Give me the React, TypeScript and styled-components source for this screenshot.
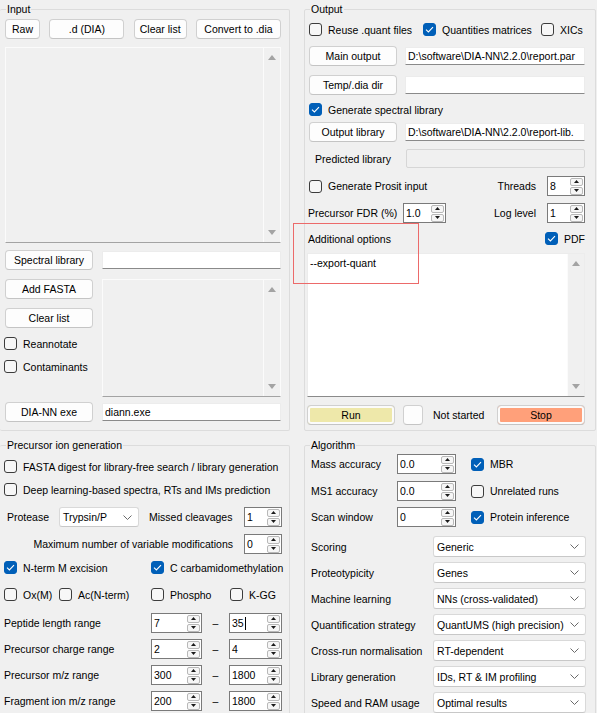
import React from "react";
import styled, { createGlobalStyle } from "styled-components";

const GlobalStyle = createGlobalStyle`
  html, body { margin: 0; padding: 0; background: #f0f0f0; }
  * { box-sizing: border-box; }
`;

const Root = styled.div`
  position: relative;
  width: 597px;
  height: 713px;
  overflow: hidden;
  background: #f0f0f0;
  display: grid;
  grid-template-columns: 290px 292px;
  grid-template-rows: 428px 290px;
  column-gap: 14px;
  row-gap: 8px;
  padding-top: 3px;
  font-family: "Liberation Sans", Arial, sans-serif;
  font-size: 10.5px;
  color: #000;
`;

const Group = styled.fieldset<{ $pl: number; $pr: number; $noLeft?: boolean }>`
  margin: 0;
  min-width: 0;
  padding: 0 ${(p) => p.$pr}px 0 ${(p) => p.$pl}px;
  border: 1px solid #dcdcdc;
  border-left: ${(p) => (p.$noLeft ? "none" : "1px solid #dcdcdc")};
  border-radius: 2px;
  display: flex;
  flex-direction: column;
`;

const Legend = styled.legend<{ $ml: number }>`
  padding: 0 1px;
  margin-left: ${(p) => p.$ml}px;
  line-height: 13px;
  font-size: 10.5px;
`;

const Row = styled.div<{ $mt?: number; $h?: number; $ml?: number; $end?: boolean; $gap?: number }>`
  display: flex;
  align-items: center;
  flex-shrink: 0;
  margin-top: ${(p) => p.$mt ?? 0}px;
  margin-left: ${(p) => p.$ml ?? 0}px;
  height: ${(p) => p.$h ?? 20}px;
  gap: ${(p) => p.$gap ?? 0}px;
  justify-content: ${(p) => (p.$end ? "flex-end" : "flex-start")};
  white-space: nowrap;
`;

const SpreadRow = styled(Row)`
  justify-content: space-between;
`;

const Spacer = styled.div`
  flex: 1;
`;

const Btn = styled.div<{ $w: number; $fill?: string }>`
  width: ${(p) => p.$w}px;
  height: 20px;
  flex-shrink: 0;
  border: 1px solid #d0d0d0;
  border-bottom-color: #c4c4c4;
  border-radius: 4px;
  background: ${(p) => p.$fill ?? "#fdfdfd"};
  box-shadow: ${(p) => (p.$fill ? "inset 0 0 0 2px #fbfbfb" : "none")};
  display: flex;
  align-items: center;
  justify-content: center;
`;

const Field = styled.div<{ $w: number; $disabled?: boolean }>`
  width: ${(p) => p.$w}px;
  height: ${(p) => (p.$disabled ? 19 : 18)}px;
  flex-shrink: 0;
  background: ${(p) => (p.$disabled ? "#f0f0f0" : "#fff")};
  border: 1px solid ${(p) => (p.$disabled ? "#d6d6d6" : "#ececec")};
  border-bottom-color: ${(p) => (p.$disabled ? "#d6d6d6" : "#8a8a8a")};
  border-radius: ${(p) => (p.$disabled ? 2 : 1)}px;
  padding-left: 2px;
  line-height: 16px;
  overflow: hidden;
  white-space: nowrap;
`;

const Label = styled.div<{ $w?: number; $center?: boolean; $pl?: number }>`
  width: ${(p) => (p.$w ? `${p.$w}px` : "auto")};
  flex-shrink: 0;
  padding-left: ${(p) => p.$pl ?? 0}px;
  text-align: ${(p) => (p.$center ? "center" : "left")};
  white-space: nowrap;
`;

const ListBox = styled.div<{ $w: number; $h: number }>`
  width: ${(p) => p.$w}px;
  height: ${(p) => p.$h}px;
  flex-shrink: 0;
  background: #f0f0f0;
  border: 1px solid #fbfbfb;
  border-bottom-color: #a3a3a3;
  display: flex;
  justify-content: flex-end;
`;

const TextArea = styled.div`
  width: 278px;
  height: 144px;
  margin-left: -2px;
  flex-shrink: 0;
  background: #fff;
  border: 1px solid #ececec;
  border-bottom-color: #8a8a8a;
  display: flex;
  padding-left: 2px;
`;

const AreaText = styled.div`
  flex: 1;
  padding-top: 3px;
  line-height: 13px;
`;

const ScrollCol = styled.div<{ $bg: string }>`
  width: 17px;
  height: 100%;
  background: ${(p) => p.$bg};
  border-left: 1px solid #fbfbfb;
  display: flex;
  flex-direction: column;
  justify-content: space-between;
  align-items: center;
  padding: 7px 0 7px;
`;

const CheckWrap = styled.div<{ $w?: number; $ml?: number }>`
  display: flex;
  align-items: center;
  gap: 6px;
  width: ${(p) => (p.$w ? `${p.$w}px` : "auto")};
  margin-left: ${(p) => p.$ml ?? 0}px;
  flex-shrink: 0;
  height: 13px;
  white-space: nowrap;
`;

const Box = styled.span<{ $on: boolean }>`
  width: 13px;
  height: 13px;
  flex-shrink: 0;
  border-radius: 3px;
  border: 1px solid ${(p) => (p.$on ? "#005fb8" : "#3c3c3c")};
  background: ${(p) => (p.$on ? "#005fb8" : "#f7f7f7")};
  display: flex;
  align-items: center;
  justify-content: center;
`;

const SpinBox = styled.div<{ $w: number }>`
  width: ${(p) => p.$w}px;
  height: 20px;
  flex-shrink: 0;
  background: #fff;
  border: 1px solid #7a7a7a;
  display: flex;
  align-items: center;
  padding-left: 2px;
`;

const SpinValue = styled.div`
  flex: 1;
  display: flex;
  align-items: center;
`;

const Caret = styled.span`
  width: 1px;
  height: 13px;
  background: #000;
  margin-left: 1px;
`;

const SpinBtns = styled.div`
  display: flex;
  flex-direction: column;
  gap: 1px;
  margin-right: 1px;
`;

const SpinBtn = styled.span`
  width: 13px;
  height: 8px;
  border: 1px solid #b8b8b8;
  border-radius: 2px;
  background: #f6f6f6;
  display: flex;
  align-items: center;
  justify-content: center;
`;

const Select = styled.div<{ $w: number; $h: number }>`
  width: ${(p) => p.$w}px;
  height: ${(p) => p.$h}px;
  flex-shrink: 0;
  background: #fff;
  border: 1px solid #d9d9d9;
  border-bottom-color: #c8c8c8;
  border-radius: 3px;
  display: flex;
  align-items: center;
  justify-content: space-between;
  padding: 0 6px 0 3px;
  white-space: nowrap;
  overflow: hidden;
`;

const Dash = styled.div`
  width: 27px;
  flex-shrink: 0;
  text-align: center;
`;

const Column = styled.div<{ $w: number }>`
  width: ${(p) => p.$w}px;
  align-self: flex-start;
  display: flex;
  flex-direction: column;
  flex-shrink: 0;
`;

const Highlight = styled.div`
  position: absolute;
  left: 293px;
  top: 223px;
  width: 126px;
  height: 61px;
  border: 1px solid #ec6a6a;
  pointer-events: none;
`;

function Check({ on, label, w, ml }: { on?: boolean; label: string; w?: number; ml?: number }) {
  return (
    <CheckWrap $w={w} $ml={ml}>
      <Box $on={!!on}>
        {on && (
          <svg width="9" height="7" viewBox="0 0 9 7">
            <path d="M1 3.6 L3.4 6 L8 1.2" stroke="#fff" strokeWidth="1.1" fill="none" />
          </svg>
        )}
      </Box>
      <span>{label}</span>
    </CheckWrap>
  );
}

function Tri({ down, color }: { down?: boolean; color: string }) {
  return (
    <svg width="8" height="5" viewBox="0 0 8 5">
      <path d={down ? "M0 0 L8 0 L4 5Z" : "M0 5 L4 0 L8 5Z"} fill={color} />
    </svg>
  );
}

function SmallTri({ down }: { down?: boolean }) {
  return (
    <svg width="5" height="3" viewBox="0 0 5 3">
      <path d={down ? "M0 0 L5 0 L2.5 3Z" : "M0 3 L2.5 0 L5 3Z"} fill="#1a1a1a" />
    </svg>
  );
}

function Spin({ value, w, caret }: { value: string; w: number; caret?: boolean }) {
  return (
    <SpinBox $w={w}>
      <SpinValue>
        {value}
        {caret && <Caret />}
      </SpinValue>
      <SpinBtns>
        <SpinBtn>
          <SmallTri />
        </SpinBtn>
        <SpinBtn>
          <SmallTri down />
        </SpinBtn>
      </SpinBtns>
    </SpinBox>
  );
}

function Combo({ value, w, h }: { value: string; w: number; h: number }) {
  return (
    <Select $w={w} $h={h}>
      <span>{value}</span>
      <svg width="9" height="5" viewBox="0 0 9 5">
        <path d="M0.5 0.5 L4.5 4.5 L8.5 0.5" stroke="#6a6a6a" fill="none" />
      </svg>
    </Select>
  );
}

function Scroll({ bg }: { bg: string }) {
  return (
    <ScrollCol $bg={bg}>
      <Tri color="#a3a3a3" />
      <Tri down color="#a3a3a3" />
    </ScrollCol>
  );
}

const ranges = [
  { label: "Peptide length range", a: "7", b: "35", caret: true },
  { label: "Precursor charge range", a: "2", b: "4" },
  { label: "Precursor m/z range", a: "300", b: "1800" },
  { label: "Fragment ion m/z range", a: "200", b: "1800" },
];

const algoSelects = [
  { label: "Proteotypicity", value: "Genes" },
  { label: "Machine learning", value: "NNs (cross-validated)" },
  { label: "Quantification strategy", value: "QuantUMS (high precision)" },
  { label: "Cross-run normalisation", value: "RT-dependent" },
  { label: "Library generation", value: "IDs, RT & IM profiling" },
  { label: "Speed and RAM usage", value: "Optimal results" },
];

export default function App() {
  return (
    <>
      <GlobalStyle />
      <Root>
        <Group $pl={5} $pr={8} $noLeft>
          <Legend $ml={1}>Input</Legend>
          <SpreadRow $mt={3}>
            <Btn $w={35}>Raw</Btn>
            <Btn $w={75}>.d (DIA)</Btn>
            <Btn $w={53}>Clear list</Btn>
            <Btn $w={85}>Convert to .dia</Btn>
          </SpreadRow>
          <Row $mt={8} $h={196}>
            <ListBox $w={276} $h={196}>
              <Scroll bg="#f0f0f0" />
            </ListBox>
          </Row>
          <Row $mt={7} $gap={9}>
            <Btn $w={88}>Spectral library</Btn>
            <Field $w={179} />
          </Row>
          <Row $mt={9} $h={118} $gap={9}>
            <Column $w={88}>
              <Btn $w={88}>Add FASTA</Btn>
              <Row $mt={9}>
                <Btn $w={88}>Clear list</Btn>
              </Row>
              <Row $mt={9} $h={13}>
                <Check label="Reannotate" ml={-1} />
              </Row>
              <Row $mt={10} $h={13}>
                <Check label="Contaminants" ml={-1} />
              </Row>
            </Column>
            <ListBox $w={179} $h={118}>
              <Scroll bg="#f0f0f0" />
            </ListBox>
          </Row>
          <Row $mt={5} $gap={9}>
            <Btn $w={88}>DIA-NN exe</Btn>
            <Field $w={179}>diann.exe</Field>
          </Row>
        </Group>

        <Group $pl={4} $pr={10}>
          <Legend $ml={1}>Output</Legend>
          <Row $mt={7} $h={13}>
            <Check label="Reuse .quant files" w={114} />
            <Check on label="Quantities matrices" w={118} />
            <Check label="XICs" />
          </Row>
          <Row $mt={10} $gap={8}>
            <Btn $w={88}>Main output</Btn>
            <Field $w={180}>D:\software\DIA-NN\2.2.0\report.par</Field>
          </Row>
          <Row $mt={9} $gap={8}>
            <Btn $w={88}>Temp/.dia dir</Btn>
            <Field $w={180} />
          </Row>
          <Row $mt={8} $h={13}>
            <Check on label="Generate spectral library" />
          </Row>
          <Row $mt={6} $gap={8}>
            <Btn $w={88}>Output library</Btn>
            <Field $w={180}>D:\software\DIA-NN\2.2.0\report-lib.</Field>
          </Row>
          <Row $mt={7} $h={19} $gap={9}>
            <Label $w={88} $center>
              Predicted library
            </Label>
            <Field $w={179} $disabled />
          </Row>
          <Row $mt={8} $gap={11}>
            <Check label="Generate Prosit input" />
            <Spacer />
            <Label>Threads</Label>
            <Spin value="8" w={38} />
          </Row>
          <Row $mt={7} $ml={-1}>
            <Label $w={95}>Precursor FDR (%)</Label>
            <Spin value="1.0" w={43} />
            <Spacer />
            <Label style={{ marginRight: 11 }}>Log level</Label>
            <Spin value="1" w={38} />
          </Row>
          <Row $mt={9} $h={13} $ml={-1}>
            <Label>Additional options</Label>
            <Spacer />
            <Check on label="PDF" />
          </Row>
          <Row $mt={8} $h={144}>
            <TextArea>
              <AreaText>--export-quant</AreaText>
              <Scroll bg="#f0f0f0" />
            </TextArea>
          </Row>
          <Row $mt={8} $ml={-2}>
            <Btn $w={88} $fill="#eee8aa">
              Run
            </Btn>
            <Btn $w={20} style={{ marginLeft: 8 }} />
            <Label $pl={10}>Not started</Label>
            <Spacer />
            <Btn $w={88} $fill="#ffa07a">
              Stop
            </Btn>
          </Row>
        </Group>

        <Group $pl={5} $pr={7} $noLeft>
          <Legend $ml={1}>Precursor ion generation</Legend>
          <Row $mt={8} $h={13}>
            <Check label="FASTA digest for library-free search / library generation" ml={-1} />
          </Row>
          <Row $mt={10} $h={13}>
            <Check label="Deep learning-based spectra, RTs and IMs prediction" ml={-1} />
          </Row>
          <Row $mt={11}>
            <Label $w={54} $pl={2}>
              Protease
            </Label>
            <Combo value="Trypsin/P" w={80} h={20} />
            <Label $w={105} $pl={10}>
              Missed cleavages
            </Label>
            <Spin value="1" w={38} />
          </Row>
          <Row $mt={7} $end $gap={11}>
            <Label>Maximum number of variable modifications</Label>
            <Spin value="0" w={38} />
          </Row>
          <Row $mt={7} $h={13} $ml={-1}>
            <Check on label="N-term M excision" w={147} />
            <Check on label="C carbamidomethylation" />
          </Row>
          <Row $mt={14} $h={13} $ml={-1}>
            <Check label="Ox(M)" w={55} />
            <Check label="Ac(N-term)" w={92} />
            <Check label="Phospho" w={79} />
            <Check label="K-GG" />
          </Row>
          {ranges.map((r, i) => (
            <Row key={r.label} $mt={i === 0 ? 12 : 6} $ml={-1}>
              <Label $w={147}>{r.label}</Label>
              <Spin value={r.a} w={51} />
              <Dash>–</Dash>
              <Spin value={r.b} w={53} caret={r.caret} />
            </Row>
          ))}
        </Group>

        <Group $pl={6} $pr={9}>
          <Legend $ml={-1}>Algorithm</Legend>
          <Row $mt={2}>
            <Label $w={86}>Mass accuracy</Label>
            <Spin value="0.0" w={59} />
            <Check on label="MBR" ml={15} />
          </Row>
          <Row $mt={7}>
            <Label $w={86}>MS1 accuracy</Label>
            <Spin value="0.0" w={59} />
            <Check label="Unrelated runs" ml={15} />
          </Row>
          <Row $mt={6}>
            <Label $w={86}>Scan window</Label>
            <Spin value="0" w={59} />
            <Check on label="Protein inference" ml={15} />
          </Row>
          <Row $mt={9} $h={21}>
            <Label $w={122}>Scoring</Label>
            <Combo value="Generic" w={153} h={21} />
          </Row>
          {algoSelects.map((s) => (
            <Row key={s.label} $mt={5} $h={21}>
              <Label $w={122}>{s.label}</Label>
              <Combo value={s.value} w={153} h={21} />
            </Row>
          ))}
        </Group>

        <Highlight />
      </Root>
    </>
  );
}
